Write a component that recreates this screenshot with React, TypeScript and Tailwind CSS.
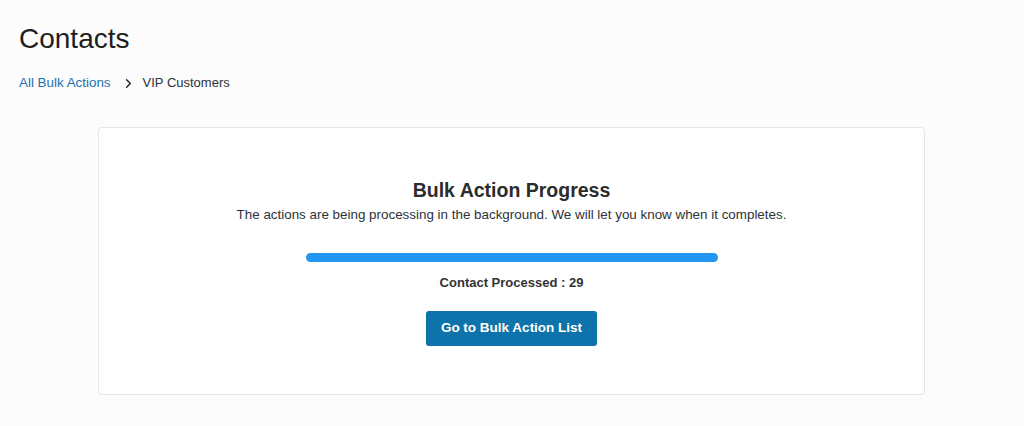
import { ChevronRight } from "lucide-react";

export default function App() {
  return (
    <div
      className="min-h-[426px] w-full bg-[#fcfcfc] text-[#1e1e1e]"
      style={{ fontFamily: '"Liberation Sans", Arial, sans-serif' }}
    >
      <div className="px-[19px] pt-[22px]">
        <h1 className="text-[28px] leading-[34px] font-normal text-[#1e1e1e]">Contacts</h1>
        <nav className="mt-[18px] flex items-center text-[13.4px] leading-[18px]">
          <a className="text-[#2271b1]">All Bulk Actions</a>
          <ChevronRight className="ml-[10px] mr-[7px] text-[#1e1e1e]" size={15} strokeWidth={2.2} />
          <span className="text-[13px] text-[#2c3338]">VIP Customers</span>
        </nav>
      </div>

      <div className="ml-[98px] mt-[35px] w-[827px] rounded-[4px] border border-[#e6e6e6] bg-white pt-[50px] pb-[48px]">
        <div className="flex flex-col items-center">
          <h2 className="text-[19.5px] leading-[24px] font-bold text-[#2c2c2c]">Bulk Action Progress</h2>
          <p className="mt-[4px] text-[13.4px] leading-[18px] text-[#2c3338]">
            The actions are being processing in the background. We will let you know when it completes.
          </p>
          <div className="mt-[29px] h-[9px] w-[412px] rounded-full bg-[#2196f3]" />
          <p className="mt-[12px] text-[13px] leading-[18px] font-bold text-[#333]">Contact Processed : 29</p>
          <button className="mt-[19px] h-[35px] w-[171px] rounded-[3px] bg-[#0e73aa] text-[13.5px] font-bold text-white">
            Go to Bulk Action List
          </button>
        </div>
      </div>
    </div>
  );
}
